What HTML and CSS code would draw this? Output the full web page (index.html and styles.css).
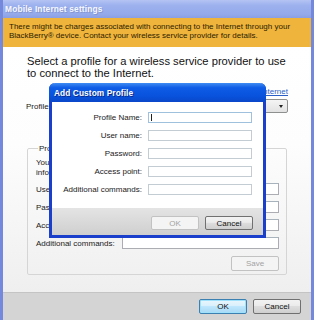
FILE: index.html
```html
<!doctype html>
<html lang="en">
<head>
    <meta charset="UTF-8">
    <title>Mobile Internet settings</title>
    <link rel="stylesheet" href="styles.css">
</head>
<body>
    <div class="window">
        <div class="titlebar">Mobile Internet settings</div>

        <div class="notice">
            There might be charges associated with connecting to the Internet through your<br>
            BlackBerry® device. Contact your wireless service provider for details.
        </div>

        <div class="content">
            <h1 class="heading">Select a profile for a wireless service provider to use<br>to connect to the Internet.</h1>

            <div class="profile-row">
                <span class="profile-label">Profile:</span>
                <div class="profile-pick">
                    <a href="#" class="link">Create a custom profile for the Internet</a>
                    <div class="select">
                        <span class="select-text">Custom profile</span>
                        <span class="select-arrow"></span>
                    </div>
                </div>
            </div>

            <fieldset class="group">
                <legend>Profile details</legend>
                <p class="group-info">Your wireless service provider can give you the<br>information for these fields.</p>
                <div class="fields">
                    <label>User name:</label>
                    <span class="input"></span>
                    <label>Password:</label>
                    <span class="input"></span>
                    <label>Access point:</label>
                    <span class="input"></span>
                    <label>Additional commands:</label>
                    <span class="input"></span>
                </div>
                <div class="group-actions">
                    <button class="btn" disabled>Save</button>
                </div>
            </fieldset>
        </div>

        <div class="footer">
            <button class="btn btn-default">OK</button>
            <button class="btn">Cancel</button>
        </div>

        <!-- modal over the settings window -->
        <div class="dialog">
            <div class="dialog-title">Add Custom Profile</div>
            <div class="dialog-body">
                <label>Profile Name:</label>
                <span class="input input-focus"><span class="caret"></span></span>
                <label>User name:</label>
                <span class="input"></span>
                <label>Password:</label>
                <span class="input"></span>
                <label>Access point:</label>
                <span class="input"></span>
                <label>Additional commands:</label>
                <span class="input"></span>
            </div>
            <div class="dialog-footer">
                <button class="btn" disabled>OK</button>
                <button class="btn">Cancel</button>
            </div>
        </div>
    </div>
</body>
</html>
```

FILE: styles.css
```css
* {
    box-sizing: border-box;
}

body {
    margin: 0;
    font-family: 'Liberation Sans', Arial, sans-serif;
    font-size: 8px;
    color: #1a1a1a;
    background: #fff;
}

.window {
    position: relative;
    width: 314px;
    height: 320px;
    display: flex;
    flex-direction: column;
    border-left: 3px solid #7489dc;
    border-right: 3px solid #7489dc;
    background: #fff;
    overflow: hidden;
}

.titlebar {
    height: 18px;
    padding: 0 0 0 2px;
    line-height: 19px;
    font-weight: 700;
    font-size: 8.4px;
    letter-spacing: 0.15px;
    color: #f4f7ff;
    text-shadow: 1px 1px 0 #8596d0;
    background: linear-gradient(#b4c3f3, #9db1ee 30%, #93a9ea 80%, #899fe2);
}

.notice {
    height: 29px;
    padding: 5px 0 0 6px;
    line-height: 8.6px;
    color: #2c2100;
    background: #efb43c;
}

.content {
    flex: 1;
    padding: 9px 24px 0 24px;
    background: linear-gradient(#fff, #fdfdfd 40%, #efefef);
}

.heading {
    margin: 0;
    font-weight: 400;
    font-size: 11.2px;
    line-height: 11.5px;
    white-space: nowrap;
    color: #111;
}

.profile-row {
    display: flex;
    justify-content: space-between;
    align-items: flex-end;
    margin-top: 8px;
    margin-left: -1px;
    margin-right: -1px;
}

.profile-label {
    padding-bottom: 2px;
}

.profile-pick {
    display: flex;
    flex-direction: column;
    align-items: flex-end;
    gap: 3px;
}

.link {
    color: #2b5fc6;
    font-size: 8px;
}

.select {
    width: 200px;
    height: 14px;
    display: flex;
    align-items: center;
    justify-content: space-between;
    padding: 0 4px;
    border: 1px solid #8e8f8f;
    border-radius: 2px;
    background: linear-gradient(#f4f4f4, #e2e2e2);
}

.select-arrow {
    width: 0;
    height: 0;
    border-left: 2.5px solid transparent;
    border-right: 2.5px solid transparent;
    border-top: 3px solid #222;
}

.group {
    min-width: 0;
    margin: 31px 0 0 0;
    padding: 0 7px 7px 8px;
    border: 1px solid #d5d5d5;
    border-radius: 2px;
    height: 131px;
}

.group legend {
    padding: 0 1px;
    margin-left: 2px;
}

.group-info {
    margin: 5px 0 0;
    line-height: 10px;
    white-space: nowrap;
}

.fields {
    display: grid;
    grid-template-columns: 86px 1fr;
    row-gap: 6px;
    align-items: center;
    margin-top: 5px;
}

.input {
    display: block;
    height: 12px;
    border: 1px solid #abadb3;
    border-top-color: #a8b2bd;
    background: #fff;
}

.group-actions {
    display: flex;
    justify-content: flex-end;
    margin-top: 7px;
}

.btn {
    height: 15px;
    min-width: 48px;
    padding: 0 6px;
    font-family: inherit;
    font-size: 8px;
    color: #111;
    border: 1px solid #707070;
    border-radius: 2px;
    background: linear-gradient(#f2f2f2, #ebebeb 45%, #dddddd 50%, #cfcfcf);
}

.btn:disabled {
    color: #a3a3a3;
    border-color: #c2c2c2;
    background: #f4f4f4;
}

.btn-default {
    border-color: #3c7fb1;
    box-shadow: inset 0 0 0 1px #9fe0fb;
    background: linear-gradient(#eaf6fd, #d9f0fc 45%, #bee6fd 50%, #a7d9f5);
}

.footer {
    height: 28px;
    display: flex;
    justify-content: flex-end;
    gap: 6px;
    padding: 6px 10px 0 0;
    border-top: 1px solid #c4c4c4;
    background: #d4d4d4;
}

.dialog {
    position: absolute;
    left: 46px;
    top: 83px;
    width: 217px;
    height: 155px;
    display: flex;
    flex-direction: column;
    border: 3px solid #1a3fcb;
    border-top: 0;
    border-radius: 6px 6px 0 0;
    background: #fff;
}

.dialog-title {
    height: 19px;
    margin: 0 -3px;
    padding: 2px 0 0 5px;
    line-height: 16px;
    font-weight: 700;
    font-size: 8.3px;
    letter-spacing: 0.1px;
    color: #fff;
    text-shadow: 1px 1px 0 #0a2a8c;
    border-radius: 6px 6px 0 0;
    background: linear-gradient(#3f8cf3, #0f5ce6 25%, #0852dc 70%, #0a46c8);
}

.dialog-body {
    flex: 1;
    display: grid;
    grid-template-columns: 90px 104px;
    column-gap: 6px;
    row-gap: 7px;
    align-content: start;
    align-items: center;
    padding-top: 10px;
}

.dialog-body label {
    text-align: right;
}

.dialog-body .input {
    height: 11px;
    border-color: #c3cbd3;
}

.dialog-body .input-focus {
    border-color: #9fc1dd;
    padding: 1px 0 0 2px;
}

.caret {
    display: block;
    width: 1px;
    height: 7px;
    background: #222;
}

.dialog-footer {
    height: 27px;
    display: flex;
    justify-content: flex-end;
    gap: 6px;
    padding: 8px 10px 0 0;
    background: linear-gradient(#e4e4e4, #cfcfcf);
}

.dialog-footer .btn {
    height: 14px;
}
```
